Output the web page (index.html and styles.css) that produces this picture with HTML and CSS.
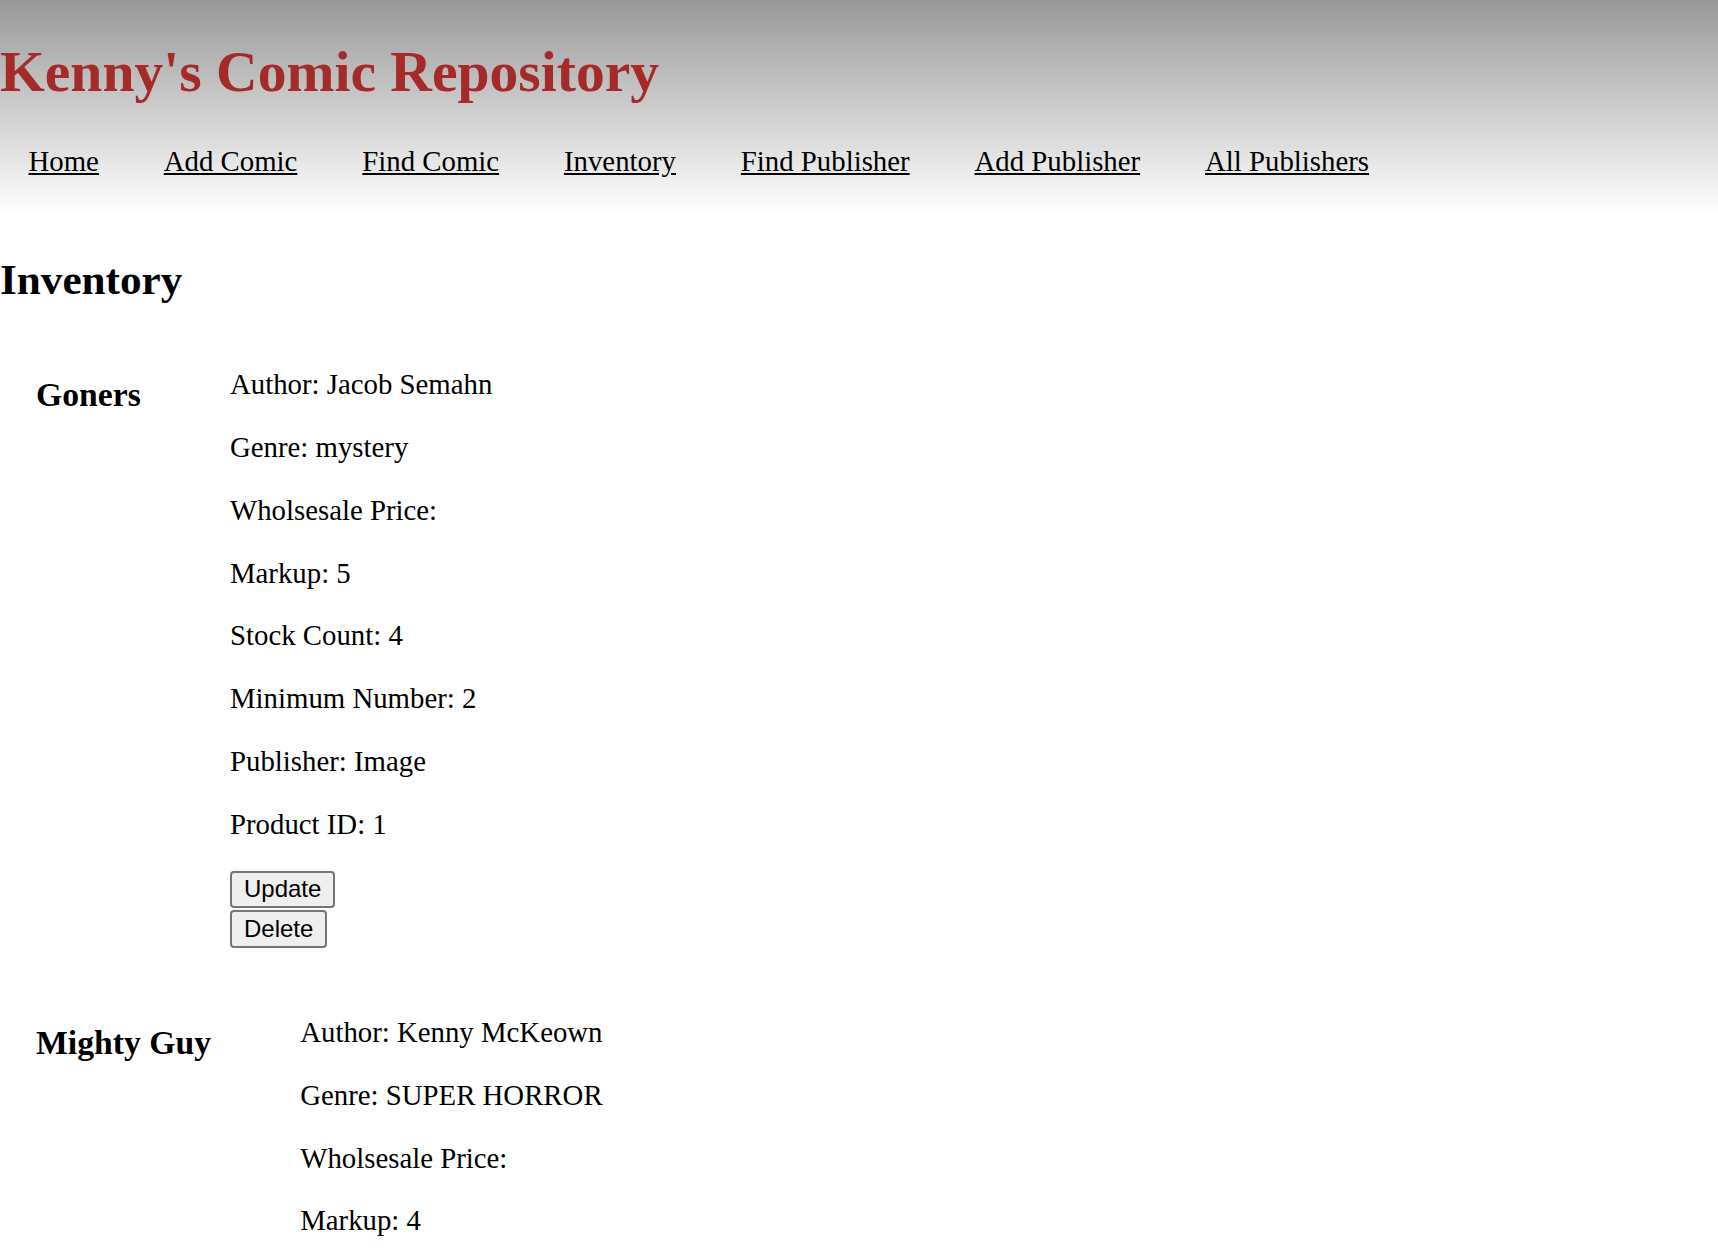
FILE: index.html
```html
<!DOCTYPE html>
<html lang="en">
<head>
<meta charset="utf-8">
<title>Kenny's Comic Repository</title>
<link rel="stylesheet" href="styles.css">
</head>
<body>
<header class="site-header">
  <h1 class="site-title">Kenny's Comic Repository</h1>
  <nav class="site-nav">
    <ul class="nav-list">
      <li><a href="#">Home</a></li>
      <li><a href="#">Add Comic</a></li>
      <li><a href="#">Find Comic</a></li>
      <li><a href="#">Inventory</a></li>
      <li><a href="#">Find Publisher</a></li>
      <li><a href="#">Add Publisher</a></li>
      <li><a href="#">All Publishers</a></li>
    </ul>
  </nav>
</header>
<main class="content">
  <h2 class="page-title">Inventory</h2>

  <section class="comic">
    <h3 class="comic-name">Goners</h3>
    <div class="comic-details">
      <p>Author: Jacob Semahn</p>
      <p>Genre: mystery</p>
      <p>Wholsesale Price:</p>
      <p>Markup: 5</p>
      <p>Stock Count: 4</p>
      <p>Minimum Number: 2</p>
      <p>Publisher: Image</p>
      <p>Product ID: 1</p>
      <form class="action-form"><button type="button" class="action-btn">Update</button></form>
      <form class="action-form"><button type="button" class="action-btn">Delete</button></form>
    </div>
  </section>

  <section class="comic">
    <h3 class="comic-name">Mighty Guy</h3>
    <div class="comic-details">
      <p>Author: Kenny McKeown</p>
      <p>Genre: SUPER HORROR</p>
      <p>Wholsesale Price:</p>
      <p>Markup: 4</p>
      <p>Stock Count: 3</p>
      <p>Minimum Number: 1</p>
      <p>Publisher: Image</p>
      <p>Product ID: 2</p>
      <form class="action-form"><button type="button" class="action-btn">Update</button></form>
      <form class="action-form"><button type="button" class="action-btn">Delete</button></form>
    </div>
  </section>
</main>
</body>
</html>
```
FILE: styles.css
```css
html, body {
  margin: 0;
  padding: 0;
}

body {
  font-family: "Liberation Serif", "Times New Roman", Times, serif;
  font-size: 28.8px;
  color: #000;
  background: #fff;
}

.site-header {
  display: flow-root;
  background: linear-gradient(to bottom, #999999 0%, #ffffff 100%);
  padding-bottom: 36px;
}

.site-title {
  margin: 39px 0 0 0;
  font-size: 57.6px;
  line-height: 66px;
  font-weight: bold;
  color: #a52a2a;
}

.nav-list {
  list-style: none;
  margin: 39px 0 0 0;
  padding: 0 0 0 28.5px;
  display: flex;
  gap: 64.9px;
  line-height: 34px;
}

.nav-list a {
  color: #000;
  text-decoration: underline;
}

.content {
  display: flow-root;
}

.page-title {
  margin: 39.7px 0 33.4px 0;
  font-size: 43.2px;
  line-height: 51.4px;
  font-weight: bold;
}

.comic {
  display: flex;
  align-items: flex-start;
  gap: 89.2px;
  padding-left: 36px;
}

.comic + .comic {
  margin-top: 36.5px;
}

.comic-name {
  margin: 36.5px 0 0 0;
  font-size: 33.7px;
  line-height: 40.1px;
  font-weight: bold;
  white-space: nowrap;
}

.comic-details p {
  margin: 28.8px 0;
  line-height: 34px;
}

.action-form {
  margin: 0 0 2px 0;
}

.action-form:first-of-type {
  padding-top: 1px;
}

.action-btn {
  display: block;
  box-sizing: border-box;
  height: 37.5px;
  padding: 0 12px;
  font-family: "Liberation Sans", Arial, Helvetica, sans-serif;
  font-size: 24px;
  line-height: 1;
  color: #000;
  background: #efefef;
  border: 2px solid #767676;
  border-radius: 4px;
}
```
